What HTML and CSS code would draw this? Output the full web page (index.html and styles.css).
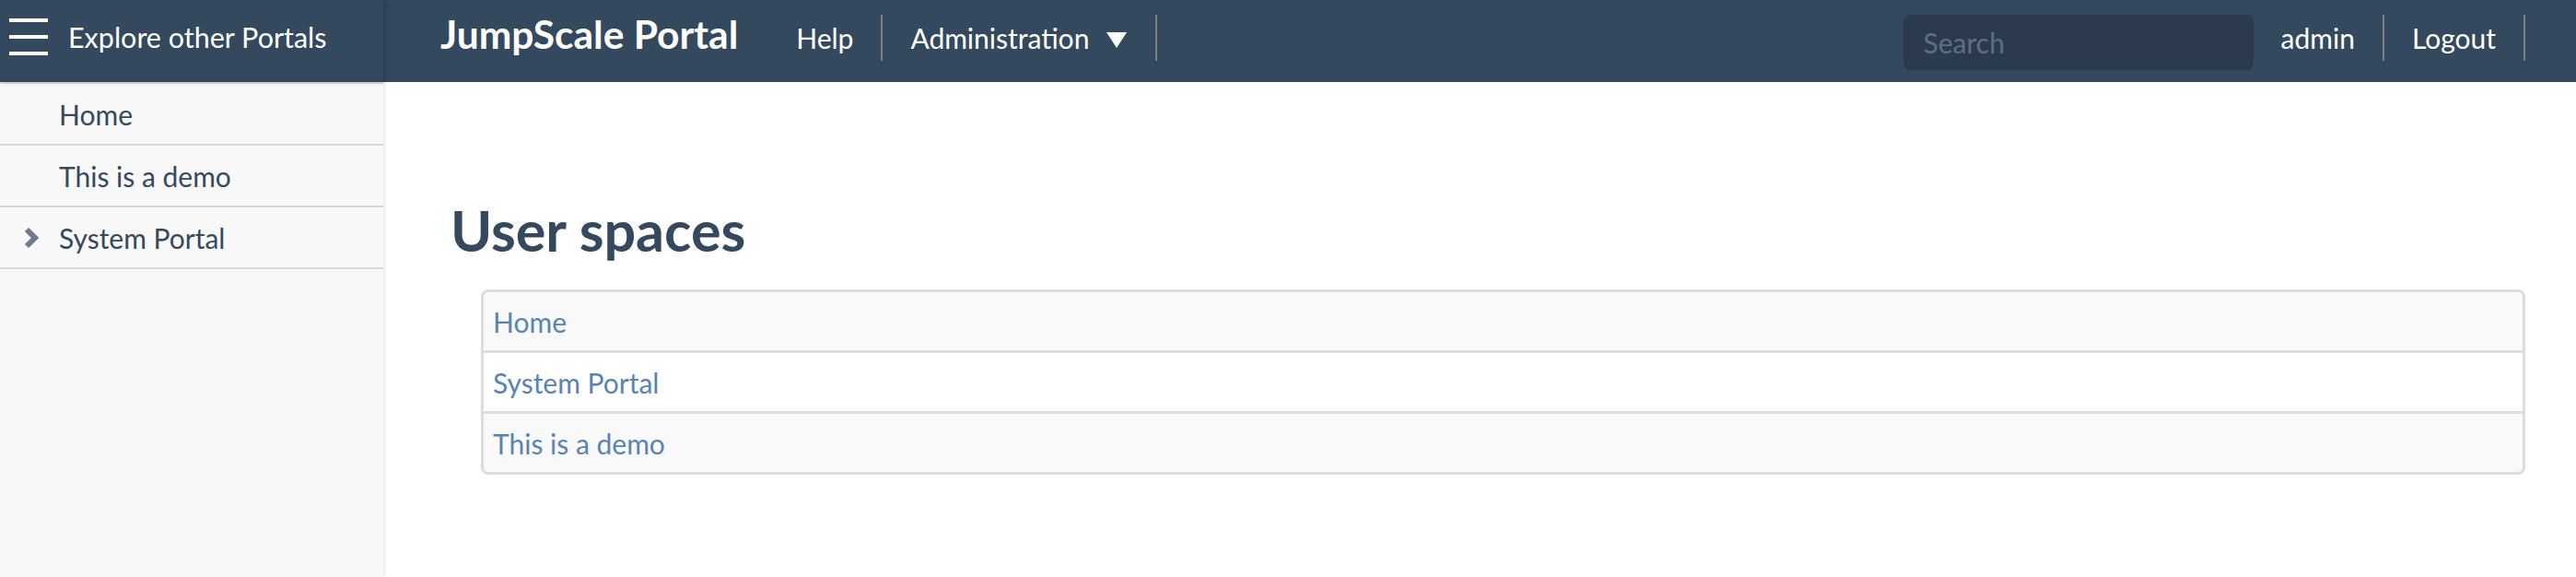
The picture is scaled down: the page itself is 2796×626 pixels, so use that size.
FILE: index.html
```html
<!DOCTYPE html>
<html lang="en">
<head>
<meta charset="utf-8">
<title>JumpScale Portal</title>
<link rel="stylesheet" href="styles.css">
</head>
<body>
<header class="topbar">
  <div class="portals">
    <span class="burger"><i></i><i></i><i></i></span>
    <span class="portals-label">Explore other Portals</span>
  </div>
  <nav class="navbar">
    <a class="brand" href="#">JumpScale Portal</a>
    <ul class="nav">
      <li><a href="#">Help</a></li>
      <li><a class="dropdown" href="#">Administration <svg class="caret" width="22" height="17" viewBox="0 0 22 17"><polygon points="0,0 22,0 11,17" fill="#fff"/></svg></a></li>
    </ul>
    <div class="nav-right">
      <input class="search" type="text" placeholder="Search">
      <ul class="nav">
        <li><a href="#">admin</a></li>
        <li><a href="#">Logout</a></li>
      </ul>
    </div>
  </nav>
</header>
<div class="layout">
  <aside class="sidebar">
    <ul class="side-list">
      <li><a href="#">Home</a></li>
      <li><a href="#">This is a demo</a></li>
      <li><svg class="chev" width="17" height="24" viewBox="0 0 17 24"><polyline points="4,3 13,12 4,21" fill="none" stroke="#6b7b92" stroke-width="6"/></svg><a href="#">System Portal</a></li>
    </ul>
  </aside>
  <main class="content">
    <h1 class="title">User spaces</h1>
    <div class="spaces">
      <div class="row odd"><a href="#">Home</a></div>
      <div class="row"><a href="#">System Portal</a></div>
      <div class="row odd"><a href="#">This is a demo</a></div>
    </div>
  </main>
</div>
</body>
</html>
```
FILE: styles.css
```css
* { box-sizing: border-box; }
html, body { margin: 0; padding: 0; }
body {
  font-family: Lato, "Liberation Sans", sans-serif;
  background: #fff;
  height: 626px;
  overflow: hidden;
}
a { text-decoration: none; color: inherit; }
ul { list-style: none; margin: 0; padding: 0; }

.topbar {
  display: flex;
  height: 89px;
  background: #34495e;
  color: #fff;
}
.portals {
  width: 416px;
  flex: none;
  display: flex;
  align-items: flex-start;
  padding-left: 10px;
  box-shadow: 3px 0 5px rgba(0,0,0,0.18);
  position: relative;
  z-index: 2;
}
.burger {
  display: flex;
  flex-direction: column;
  gap: 14px;
  margin-top: 20px;
  width: 42px;
}
.burger i {
  display: block;
  height: 4px;
  background: #fff;
}
.portals-label {
  font-size: 30.5px;
  line-height: 36px;
  margin-top: 22px;
  margin-left: 22px;
}
.navbar {
  flex: 1;
  display: flex;
  align-items: flex-start;
  padding-left: 62px;
  padding-right: 55px;
}
.brand {
  font-weight: 700;
  font-size: 42.5px;
  line-height: 50px;
  margin-top: 12px;
  margin-right: 33px;
}
.nav {
  display: flex;
  margin-top: 16px;
}
.nav li a {
  display: flex;
  align-items: center;
  height: 50px;
  padding: 0 30px;
  font-size: 30px;
  line-height: 36px;
  border-right: 2px solid #7e7e7e;
}
.nav li a.dropdown { padding-right: 31px; }
.caret { margin-left: 19px; margin-top: 5px; }
.nav-right {
  margin-left: auto;
  display: flex;
  align-items: flex-start;
}
.search {
  margin-top: 16px;
  width: 380px;
  height: 60px;
  border: none;
  border-radius: 8px;
  background: #2b3b4d;
  padding: 0 0 0 22px;
  font-family: Lato, "Liberation Sans", sans-serif;
  font-size: 30px;
  color: #fff;
  outline: none;
}
.search::placeholder { color: #5c6f86; }

.layout {
  display: flex;
  height: 537px;
}
.sidebar {
  width: 416px;
  flex: none;
  background: #f8f8f8;
  border-top: 2px solid #d6dce1;
  box-shadow: 2px 0 4px rgba(0,0,0,0.08);
  position: relative;
  z-index: 1;
}
.side-list li {
  position: relative;
  display: flex;
  align-items: center;
  height: 67px;
  padding-left: 64px;
  border-bottom: 2px solid #d6dce1;
  font-size: 30px;
  color: #34495e;
}
.chev {
  position: absolute;
  left: 25px;
  top: 21px;
}
.content {
  flex: 1;
  padding: 124px 55px 0 73px;
}
.title {
  margin: 0 0 28px 0;
  font-size: 61px;
  font-weight: 700;
  line-height: 1.2;
  color: #34495e;
}
.spaces {
  margin-left: 33px;
  border: 3px solid #dddddd;
  border-radius: 8px;
  overflow: hidden;
}
.row {
  height: 66px;
  display: flex;
  align-items: center;
  padding-left: 10px;
  border-top: 3px solid #dddddd;
  background: #fff;
  font-size: 30px;
  color: #5784b4;
}
.row:first-child { border-top: none; height: 63px; }
.row.odd { background: #f9f9f9; }
```
